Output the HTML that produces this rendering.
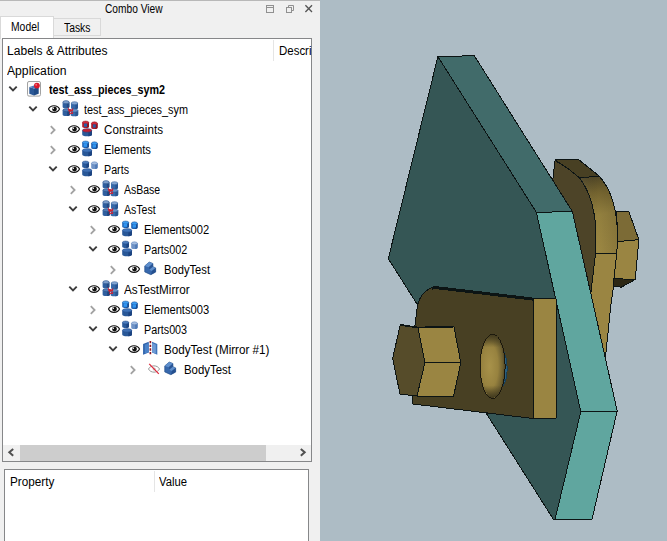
<!DOCTYPE html>
<html><head><meta charset="utf-8"><title>Combo View</title>
<style>
html,body{margin:0;padding:0}
body{width:667px;height:541px;overflow:hidden;position:relative;background:#adbcc5;font-family:"Liberation Sans",sans-serif;font-size:12px;color:#000}
.abs{position:absolute}
#panel{position:absolute;left:0;top:0;width:320px;height:541px;background:#f0f0f0}
#topline{position:absolute;left:0;top:0;width:320px;height:1px;background:#b8b8b8}
.t{position:absolute;white-space:nowrap;line-height:14px;height:14px;transform-origin:0 50%;font-size:12px}
.b{font-weight:bold}
#tabModel{position:absolute;left:0;top:16px;width:54px;height:23px;background:#fff;border:1px solid #d9d9d9;border-bottom:none;box-sizing:border-box}
#tabTasks{position:absolute;left:53px;top:18px;width:48px;height:18px;background:#f0f0f0;border:1px solid #d9d9d9;box-sizing:border-box}
#tree{position:absolute;left:2px;top:38px;width:310px;height:424px;background:#fff;border:1px solid #868789;box-sizing:border-box;overflow:hidden}
#prop{position:absolute;left:4px;top:469px;width:305px;height:80px;background:#fff;border:1px solid #868789;box-sizing:border-box}
#hsb{position:absolute;left:3px;top:445px;width:308px;height:16px;background:#f0f0f0}
#thumb{position:absolute;left:20px;top:445px;width:246px;height:16px;background:#cdcdcd}
.vsep{position:absolute;width:1px;background:#e5e5e5}
svg{position:absolute;overflow:visible}
</style></head>
<body>
<div id="panel"></div><div id="topline"></div>
<div id="tabTasks"></div><div id="tabModel"></div>
<div id="tree"></div>
<div class="vsep" style="left:273px;top:40px;height:21px"></div>
<div id="hsb"></div><div id="thumb"></div>
<div id="prop"></div>
<div class="vsep" style="left:154px;top:471px;height:21px"></div>
<svg style="left:266.0px;top:5.0px" width="9" height="8" viewBox="0 0 9 8"><rect x="0.5" y="0.5" width="7" height="7" fill="none" stroke="#909090"/><path d="M0.5 2.5 H7.5" stroke="#909090"/></svg><svg style="left:286.0px;top:5.0px" width="9" height="8" viewBox="0 0 9 8"><path d="M2.5 2.5 V0.5 H7.5 V5.5 H5.5" fill="none" stroke="#909090"/><rect x="0.5" y="2.5" width="5" height="5" fill="none" stroke="#909090"/></svg><svg style="left:305.0px;top:5.0px" width="8" height="8" viewBox="0 0 8 8"><path d="M0.4 0.3 L7 6.9 M7 0.3 L0.4 6.9" fill="none" stroke="#555" stroke-width="1.35"/></svg>
<svg style="left:7.0px;top:448.2px" width="8" height="9" viewBox="0 0 8 9"><path d="M6.2 0.9 L2.3 4.3 L6.2 7.7" fill="none" stroke="#505050" stroke-width="2"/></svg><svg style="left:299.0px;top:448.2px" width="8" height="9" viewBox="0 0 8 9"><path d="M1.8 0.9 L5.7 4.3 L1.8 7.7" fill="none" stroke="#505050" stroke-width="2"/></svg>
<svg style="left:4.8px;top:81.0px" width="16" height="16" viewBox="-8 -8 16 16"><path d="M-3.7 -2.3 L0.0 1.5 L3.7 -2.3" fill="none" stroke="#3c3c3c" stroke-width="1.9"/></svg>
<svg style="left:26.0px;top:80.9px" width="16" height="17" viewBox="0 0 16 17"><rect x="1.5" y="0.5" width="13" height="14.6" rx="1.5" fill="#fbfbfb" stroke="#a2a2a2"/><path d="M3.30 6.00 L8.00 7.60 L8.00 14.40 L3.30 12.80 Z" fill="#2b5896"/><path d="M12.70 6.00 L8.00 7.60 L8.00 14.40 L12.70 12.80 Z" fill="#1f4a85"/><path d="M3.30 6.00 L8.00 4.40 L12.70 6.00 L8.00 7.60 Z" fill="#4a7abb"/><circle cx="10.9" cy="4.6" r="2.9" fill="#d8182b"/><circle cx="10.2" cy="3.8" r="1" fill="#f06a76"/></svg>
<svg style="left:24.8px;top:101.0px" width="16" height="16" viewBox="-8 -8 16 16"><path d="M-3.7 -2.3 L0.0 1.5 L3.7 -2.3" fill="none" stroke="#3c3c3c" stroke-width="1.9"/></svg>
<svg style="left:48.0px;top:104.8px" width="12" height="8" viewBox="0 0 12 8"><path d="M0.5 4 C2.4 -0.4 9.6 -0.4 11.5 4 C9.6 8.4 2.4 8.4 0.5 4 Z" fill="#fff" stroke="#111" stroke-width="1.15"/><circle cx="6.5" cy="4.1" r="2.4" fill="#111"/><circle cx="5.3" cy="3.2" r="0.8" fill="#fff"/></svg>
<svg style="left:62.0px;top:100.4px" width="16.4" height="16.4" viewBox="0 0 16 16"><path d="M0.60 2.10 V6.50 A3.30 1.50 0 0 0 7.20 6.50 V2.10 Z" fill="#2f5f9f"/><path d="M4.72 2.10 V8.00 A3.30 1.50 0 0 0 7.20 6.50 V2.10 Z" fill="#244b84"/><ellipse cx="3.90" cy="2.10" rx="3.05" ry="1.50" fill="#7d9fcc" stroke="#244b84" stroke-width="0.5"/><path d="M8.80 3.10 V7.50 A3.40 1.50 0 0 0 15.60 7.50 V3.10 Z" fill="#376aaa"/><path d="M13.05 3.10 V9.00 A3.40 1.50 0 0 0 15.60 7.50 V3.10 Z" fill="#28548f"/><ellipse cx="12.20" cy="3.10" rx="3.15" ry="1.50" fill="#84a6d2" stroke="#28548f" stroke-width="0.5"/><path d="M0.60 9.90 V14.10 A3.60 1.50 0 0 0 7.80 14.10 V9.90 Z" fill="#2f5f9f"/><path d="M5.10 9.90 V15.60 A3.60 1.50 0 0 0 7.80 14.10 V9.90 Z" fill="#1d457d"/><ellipse cx="4.20" cy="9.90" rx="3.35" ry="1.50" fill="#4f7ab4" stroke="#1d457d" stroke-width="0.5"/><path d="M8.40 10.30 V14.30 A3.70 1.50 0 0 0 15.80 14.30 V10.30 Z" fill="#376aaa"/><path d="M13.03 10.30 V15.80 A3.70 1.50 0 0 0 15.80 14.30 V10.30 Z" fill="#28548f"/><ellipse cx="12.10" cy="10.30" rx="3.45" ry="1.50" fill="#6790c4" stroke="#28548f" stroke-width="0.5"/><path d="M5.4 6.8 L8.4 10.4 L6.6 11.4 Z M11 7.4 L8.6 10.8 L10.6 11.2 Z M6.6 12 L9.8 13.2 L7.4 14Z" fill="#d4202f"/><circle cx="8" cy="10.3" r="1.4" fill="#d4202f"/><circle cx="9.9" cy="12.6" r="1" fill="#d4202f"/></svg>
<svg style="left:44.5px;top:121.6px" width="16" height="16" viewBox="-8 -8 16 16"><path d="M-2.2 -3.8 L1.6 0.0 L-2.2 3.8" fill="none" stroke="#a2a2a2" stroke-width="1.8"/></svg>
<svg style="left:68.0px;top:124.8px" width="12" height="8" viewBox="0 0 12 8"><path d="M0.5 4 C2.4 -0.4 9.6 -0.4 11.5 4 C9.6 8.4 2.4 8.4 0.5 4 Z" fill="#fff" stroke="#111" stroke-width="1.15"/><circle cx="6.5" cy="4.1" r="2.4" fill="#111"/><circle cx="5.3" cy="3.2" r="0.8" fill="#fff"/></svg>
<svg style="left:82.0px;top:120.0px" width="16" height="17" viewBox="0 0 16 17"><path d="M0.20 2.50 V6.50 A3.40 1.50 0 0 0 7.00 6.50 V2.50 Z" fill="#b01c2c"/><path d="M4.45 2.50 V8.00 A3.40 1.50 0 0 0 7.00 6.50 V2.50 Z" fill="#8d1422"/><ellipse cx="3.60" cy="2.50" rx="3.15" ry="1.50" fill="#d02a3a" stroke="#8d1422" stroke-width="0.5"/><path d="M9.20 3.30 V7.50 A3.20 1.50 0 0 0 15.60 7.50 V3.30 Z" fill="#b01c2c"/><path d="M13.20 3.30 V9.00 A3.20 1.50 0 0 0 15.60 7.50 V3.30 Z" fill="#8d1422"/><ellipse cx="12.40" cy="3.30" rx="2.95" ry="1.50" fill="#d02a3a" stroke="#8d1422" stroke-width="0.5"/><path d="M0.20 10.40 V14.40 A4.90 1.80 0 0 0 10.00 14.40 V10.40 Z" fill="#285898"/><path d="M6.33 10.40 V16.20 A4.90 1.80 0 0 0 10.00 14.40 V10.40 Z" fill="#1c4380"/><ellipse cx="5.10" cy="10.40" rx="4.65" ry="1.80" fill="#c41f30" stroke="#1c4380" stroke-width="0.5"/></svg><svg style="left:82.0px;top:120.0px" width="16" height="17" viewBox="0 0 16 17"><rect x="2" y="3.6" width="3" height="3.2" fill="#2a5ea6"/><rect x="10.9" y="4.4" width="2.8" height="3.2" fill="#2a5ea6"/></svg>
<svg style="left:44.5px;top:141.6px" width="16" height="16" viewBox="-8 -8 16 16"><path d="M-2.2 -3.8 L1.6 0.0 L-2.2 3.8" fill="none" stroke="#a2a2a2" stroke-width="1.8"/></svg>
<svg style="left:68.0px;top:144.8px" width="12" height="8" viewBox="0 0 12 8"><path d="M0.5 4 C2.4 -0.4 9.6 -0.4 11.5 4 C9.6 8.4 2.4 8.4 0.5 4 Z" fill="#fff" stroke="#111" stroke-width="1.15"/><circle cx="6.5" cy="4.1" r="2.4" fill="#111"/><circle cx="5.3" cy="3.2" r="0.8" fill="#fff"/></svg>
<svg style="left:82.0px;top:140.0px" width="16" height="17" viewBox="0 0 16 17"><path d="M0.20 2.50 V6.50 A3.40 1.50 0 0 0 7.00 6.50 V2.50 Z" fill="#1f62b4"/><path d="M4.45 2.50 V8.00 A3.40 1.50 0 0 0 7.00 6.50 V2.50 Z" fill="#184c92"/><ellipse cx="3.60" cy="2.50" rx="3.15" ry="1.50" fill="#3a9af0" stroke="#184c92" stroke-width="0.5"/><path d="M9.20 3.30 V7.50 A3.20 1.50 0 0 0 15.60 7.50 V3.30 Z" fill="#1f62b4"/><path d="M13.20 3.30 V9.00 A3.20 1.50 0 0 0 15.60 7.50 V3.30 Z" fill="#184c92"/><ellipse cx="12.40" cy="3.30" rx="2.95" ry="1.50" fill="#3a9af0" stroke="#184c92" stroke-width="0.5"/><path d="M0.20 10.40 V14.40 A4.90 1.80 0 0 0 10.00 14.40 V10.40 Z" fill="#285898"/><path d="M6.33 10.40 V16.20 A4.90 1.80 0 0 0 10.00 14.40 V10.40 Z" fill="#1c4380"/><ellipse cx="5.10" cy="10.40" rx="4.65" ry="1.80" fill="#3f74ba" stroke="#1c4380" stroke-width="0.5"/></svg><svg style="left:82.0px;top:140.0px" width="16" height="17" viewBox="0 0 16 17"><rect x="1.6" y="3.6" width="3.6" height="3.2" fill="#2f94f0"/><rect x="10.6" y="4.4" width="3.4" height="3.2" fill="#2f94f0"/></svg>
<svg style="left:44.8px;top:161.0px" width="16" height="16" viewBox="-8 -8 16 16"><path d="M-3.7 -2.3 L0.0 1.5 L3.7 -2.3" fill="none" stroke="#3c3c3c" stroke-width="1.9"/></svg>
<svg style="left:68.0px;top:164.8px" width="12" height="8" viewBox="0 0 12 8"><path d="M0.5 4 C2.4 -0.4 9.6 -0.4 11.5 4 C9.6 8.4 2.4 8.4 0.5 4 Z" fill="#fff" stroke="#111" stroke-width="1.15"/><circle cx="6.5" cy="4.1" r="2.4" fill="#111"/><circle cx="5.3" cy="3.2" r="0.8" fill="#fff"/></svg>
<svg style="left:82.0px;top:160.0px" width="16" height="17" viewBox="0 0 16 17"><path d="M0.20 2.50 V6.50 A3.40 1.50 0 0 0 7.00 6.50 V2.50 Z" fill="#2a5a9a"/><path d="M4.45 2.50 V8.00 A3.40 1.50 0 0 0 7.00 6.50 V2.50 Z" fill="#1c4380"/><ellipse cx="3.60" cy="2.50" rx="3.15" ry="1.50" fill="#4a7cbc" stroke="#1c4380" stroke-width="0.5"/><path d="M9.20 3.30 V7.50 A3.20 1.50 0 0 0 15.60 7.50 V3.30 Z" fill="#7094c8"/><path d="M13.20 3.30 V9.00 A3.20 1.50 0 0 0 15.60 7.50 V3.30 Z" fill="#4f78b4"/><ellipse cx="12.40" cy="3.30" rx="2.95" ry="1.50" fill="#a4bde0" stroke="#4f78b4" stroke-width="0.5"/><path d="M0.20 10.40 V14.40 A4.90 1.80 0 0 0 10.00 14.40 V10.40 Z" fill="#285898"/><path d="M6.33 10.40 V16.20 A4.90 1.80 0 0 0 10.00 14.40 V10.40 Z" fill="#1c4380"/><ellipse cx="5.10" cy="10.40" rx="4.65" ry="1.80" fill="#3f70b4" stroke="#1c4380" stroke-width="0.5"/></svg>
<svg style="left:64.5px;top:181.6px" width="16" height="16" viewBox="-8 -8 16 16"><path d="M-2.2 -3.8 L1.6 0.0 L-2.2 3.8" fill="none" stroke="#a2a2a2" stroke-width="1.8"/></svg>
<svg style="left:88.0px;top:184.8px" width="12" height="8" viewBox="0 0 12 8"><path d="M0.5 4 C2.4 -0.4 9.6 -0.4 11.5 4 C9.6 8.4 2.4 8.4 0.5 4 Z" fill="#fff" stroke="#111" stroke-width="1.15"/><circle cx="6.5" cy="4.1" r="2.4" fill="#111"/><circle cx="5.3" cy="3.2" r="0.8" fill="#fff"/></svg>
<svg style="left:102.0px;top:180.4px" width="16.4" height="16.4" viewBox="0 0 16 16"><path d="M0.60 2.10 V6.50 A3.30 1.50 0 0 0 7.20 6.50 V2.10 Z" fill="#2f5f9f"/><path d="M4.72 2.10 V8.00 A3.30 1.50 0 0 0 7.20 6.50 V2.10 Z" fill="#244b84"/><ellipse cx="3.90" cy="2.10" rx="3.05" ry="1.50" fill="#7d9fcc" stroke="#244b84" stroke-width="0.5"/><path d="M8.80 3.10 V7.50 A3.40 1.50 0 0 0 15.60 7.50 V3.10 Z" fill="#376aaa"/><path d="M13.05 3.10 V9.00 A3.40 1.50 0 0 0 15.60 7.50 V3.10 Z" fill="#28548f"/><ellipse cx="12.20" cy="3.10" rx="3.15" ry="1.50" fill="#84a6d2" stroke="#28548f" stroke-width="0.5"/><path d="M0.60 9.90 V14.10 A3.60 1.50 0 0 0 7.80 14.10 V9.90 Z" fill="#2f5f9f"/><path d="M5.10 9.90 V15.60 A3.60 1.50 0 0 0 7.80 14.10 V9.90 Z" fill="#1d457d"/><ellipse cx="4.20" cy="9.90" rx="3.35" ry="1.50" fill="#4f7ab4" stroke="#1d457d" stroke-width="0.5"/><path d="M8.40 10.30 V14.30 A3.70 1.50 0 0 0 15.80 14.30 V10.30 Z" fill="#376aaa"/><path d="M13.03 10.30 V15.80 A3.70 1.50 0 0 0 15.80 14.30 V10.30 Z" fill="#28548f"/><ellipse cx="12.10" cy="10.30" rx="3.45" ry="1.50" fill="#6790c4" stroke="#28548f" stroke-width="0.5"/><path d="M5.4 6.8 L8.4 10.4 L6.6 11.4 Z M11 7.4 L8.6 10.8 L10.6 11.2 Z M6.6 12 L9.8 13.2 L7.4 14Z" fill="#d4202f"/><circle cx="8" cy="10.3" r="1.4" fill="#d4202f"/><circle cx="9.9" cy="12.6" r="1" fill="#d4202f"/></svg>
<svg style="left:64.8px;top:201.0px" width="16" height="16" viewBox="-8 -8 16 16"><path d="M-3.7 -2.3 L0.0 1.5 L3.7 -2.3" fill="none" stroke="#3c3c3c" stroke-width="1.9"/></svg>
<svg style="left:88.0px;top:204.8px" width="12" height="8" viewBox="0 0 12 8"><path d="M0.5 4 C2.4 -0.4 9.6 -0.4 11.5 4 C9.6 8.4 2.4 8.4 0.5 4 Z" fill="#fff" stroke="#111" stroke-width="1.15"/><circle cx="6.5" cy="4.1" r="2.4" fill="#111"/><circle cx="5.3" cy="3.2" r="0.8" fill="#fff"/></svg>
<svg style="left:102.0px;top:200.4px" width="16.4" height="16.4" viewBox="0 0 16 16"><path d="M0.60 2.10 V6.50 A3.30 1.50 0 0 0 7.20 6.50 V2.10 Z" fill="#2f5f9f"/><path d="M4.72 2.10 V8.00 A3.30 1.50 0 0 0 7.20 6.50 V2.10 Z" fill="#244b84"/><ellipse cx="3.90" cy="2.10" rx="3.05" ry="1.50" fill="#7d9fcc" stroke="#244b84" stroke-width="0.5"/><path d="M8.80 3.10 V7.50 A3.40 1.50 0 0 0 15.60 7.50 V3.10 Z" fill="#376aaa"/><path d="M13.05 3.10 V9.00 A3.40 1.50 0 0 0 15.60 7.50 V3.10 Z" fill="#28548f"/><ellipse cx="12.20" cy="3.10" rx="3.15" ry="1.50" fill="#84a6d2" stroke="#28548f" stroke-width="0.5"/><path d="M0.60 9.90 V14.10 A3.60 1.50 0 0 0 7.80 14.10 V9.90 Z" fill="#2f5f9f"/><path d="M5.10 9.90 V15.60 A3.60 1.50 0 0 0 7.80 14.10 V9.90 Z" fill="#1d457d"/><ellipse cx="4.20" cy="9.90" rx="3.35" ry="1.50" fill="#4f7ab4" stroke="#1d457d" stroke-width="0.5"/><path d="M8.40 10.30 V14.30 A3.70 1.50 0 0 0 15.80 14.30 V10.30 Z" fill="#376aaa"/><path d="M13.03 10.30 V15.80 A3.70 1.50 0 0 0 15.80 14.30 V10.30 Z" fill="#28548f"/><ellipse cx="12.10" cy="10.30" rx="3.45" ry="1.50" fill="#6790c4" stroke="#28548f" stroke-width="0.5"/><path d="M5.4 6.8 L8.4 10.4 L6.6 11.4 Z M11 7.4 L8.6 10.8 L10.6 11.2 Z M6.6 12 L9.8 13.2 L7.4 14Z" fill="#d4202f"/><circle cx="8" cy="10.3" r="1.4" fill="#d4202f"/><circle cx="9.9" cy="12.6" r="1" fill="#d4202f"/></svg>
<svg style="left:84.5px;top:221.6px" width="16" height="16" viewBox="-8 -8 16 16"><path d="M-2.2 -3.8 L1.6 0.0 L-2.2 3.8" fill="none" stroke="#a2a2a2" stroke-width="1.8"/></svg>
<svg style="left:108.0px;top:224.8px" width="12" height="8" viewBox="0 0 12 8"><path d="M0.5 4 C2.4 -0.4 9.6 -0.4 11.5 4 C9.6 8.4 2.4 8.4 0.5 4 Z" fill="#fff" stroke="#111" stroke-width="1.15"/><circle cx="6.5" cy="4.1" r="2.4" fill="#111"/><circle cx="5.3" cy="3.2" r="0.8" fill="#fff"/></svg>
<svg style="left:122.0px;top:220.0px" width="16" height="17" viewBox="0 0 16 17"><path d="M0.20 2.50 V6.50 A3.40 1.50 0 0 0 7.00 6.50 V2.50 Z" fill="#1f62b4"/><path d="M4.45 2.50 V8.00 A3.40 1.50 0 0 0 7.00 6.50 V2.50 Z" fill="#184c92"/><ellipse cx="3.60" cy="2.50" rx="3.15" ry="1.50" fill="#3a9af0" stroke="#184c92" stroke-width="0.5"/><path d="M9.20 3.30 V7.50 A3.20 1.50 0 0 0 15.60 7.50 V3.30 Z" fill="#1f62b4"/><path d="M13.20 3.30 V9.00 A3.20 1.50 0 0 0 15.60 7.50 V3.30 Z" fill="#184c92"/><ellipse cx="12.40" cy="3.30" rx="2.95" ry="1.50" fill="#3a9af0" stroke="#184c92" stroke-width="0.5"/><path d="M0.20 10.40 V14.40 A4.90 1.80 0 0 0 10.00 14.40 V10.40 Z" fill="#285898"/><path d="M6.33 10.40 V16.20 A4.90 1.80 0 0 0 10.00 14.40 V10.40 Z" fill="#1c4380"/><ellipse cx="5.10" cy="10.40" rx="4.65" ry="1.80" fill="#3f74ba" stroke="#1c4380" stroke-width="0.5"/></svg><svg style="left:122.0px;top:220.0px" width="16" height="17" viewBox="0 0 16 17"><rect x="1.6" y="3.6" width="3.6" height="3.2" fill="#2f94f0"/><rect x="10.6" y="4.4" width="3.4" height="3.2" fill="#2f94f0"/></svg>
<svg style="left:84.8px;top:241.0px" width="16" height="16" viewBox="-8 -8 16 16"><path d="M-3.7 -2.3 L0.0 1.5 L3.7 -2.3" fill="none" stroke="#3c3c3c" stroke-width="1.9"/></svg>
<svg style="left:108.0px;top:244.8px" width="12" height="8" viewBox="0 0 12 8"><path d="M0.5 4 C2.4 -0.4 9.6 -0.4 11.5 4 C9.6 8.4 2.4 8.4 0.5 4 Z" fill="#fff" stroke="#111" stroke-width="1.15"/><circle cx="6.5" cy="4.1" r="2.4" fill="#111"/><circle cx="5.3" cy="3.2" r="0.8" fill="#fff"/></svg>
<svg style="left:122.0px;top:240.0px" width="16" height="17" viewBox="0 0 16 17"><path d="M0.20 2.50 V6.50 A3.40 1.50 0 0 0 7.00 6.50 V2.50 Z" fill="#2a5a9a"/><path d="M4.45 2.50 V8.00 A3.40 1.50 0 0 0 7.00 6.50 V2.50 Z" fill="#1c4380"/><ellipse cx="3.60" cy="2.50" rx="3.15" ry="1.50" fill="#4a7cbc" stroke="#1c4380" stroke-width="0.5"/><path d="M9.20 3.30 V7.50 A3.20 1.50 0 0 0 15.60 7.50 V3.30 Z" fill="#7094c8"/><path d="M13.20 3.30 V9.00 A3.20 1.50 0 0 0 15.60 7.50 V3.30 Z" fill="#4f78b4"/><ellipse cx="12.40" cy="3.30" rx="2.95" ry="1.50" fill="#a4bde0" stroke="#4f78b4" stroke-width="0.5"/><path d="M0.20 10.40 V14.40 A4.90 1.80 0 0 0 10.00 14.40 V10.40 Z" fill="#285898"/><path d="M6.33 10.40 V16.20 A4.90 1.80 0 0 0 10.00 14.40 V10.40 Z" fill="#1c4380"/><ellipse cx="5.10" cy="10.40" rx="4.65" ry="1.80" fill="#3f70b4" stroke="#1c4380" stroke-width="0.5"/></svg>
<svg style="left:104.5px;top:261.6px" width="16" height="16" viewBox="-8 -8 16 16"><path d="M-2.2 -3.8 L1.6 0.0 L-2.2 3.8" fill="none" stroke="#a2a2a2" stroke-width="1.8"/></svg>
<svg style="left:128.0px;top:264.8px" width="12" height="8" viewBox="0 0 12 8"><path d="M0.5 4 C2.4 -0.4 9.6 -0.4 11.5 4 C9.6 8.4 2.4 8.4 0.5 4 Z" fill="#fff" stroke="#111" stroke-width="1.15"/><circle cx="6.5" cy="4.1" r="2.4" fill="#111"/><circle cx="5.3" cy="3.2" r="0.8" fill="#fff"/></svg>
<svg style="left:144.0px;top:261.2px" width="12.4" height="14.2" viewBox="0 0 13.2 15.6"><path d="M0.6 5.4 L5.6 1.2 L9.6 2.8 L9.6 6.2 L12.6 7.6 L12.6 12.2 L7.2 15 L0.6 12 Z" fill="#3768ac" stroke="#1f4a85" stroke-width="0.7"/><path d="M0.6 5.4 L5.6 1.2 L9.6 2.8 L5 6.8 Z" fill="#5f8fcc"/><path d="M5 6.8 L9.6 2.8 L9.6 6.2 L5.6 9.6 Z" fill="#2a5595"/><path d="M5.6 9.6 L9.6 6.2 L12.6 7.6 L8.4 11 Z" fill="#5f8fcc"/><path d="M8.4 11 L12.6 7.6 L12.6 12.2 L7.6 15 Z" fill="#24508f"/></svg>
<svg style="left:64.8px;top:281.0px" width="16" height="16" viewBox="-8 -8 16 16"><path d="M-3.7 -2.3 L0.0 1.5 L3.7 -2.3" fill="none" stroke="#3c3c3c" stroke-width="1.9"/></svg>
<svg style="left:88.0px;top:284.8px" width="12" height="8" viewBox="0 0 12 8"><path d="M0.5 4 C2.4 -0.4 9.6 -0.4 11.5 4 C9.6 8.4 2.4 8.4 0.5 4 Z" fill="#fff" stroke="#111" stroke-width="1.15"/><circle cx="6.5" cy="4.1" r="2.4" fill="#111"/><circle cx="5.3" cy="3.2" r="0.8" fill="#fff"/></svg>
<svg style="left:102.0px;top:280.4px" width="16.4" height="16.4" viewBox="0 0 16 16"><path d="M0.60 2.10 V6.50 A3.30 1.50 0 0 0 7.20 6.50 V2.10 Z" fill="#2f5f9f"/><path d="M4.72 2.10 V8.00 A3.30 1.50 0 0 0 7.20 6.50 V2.10 Z" fill="#244b84"/><ellipse cx="3.90" cy="2.10" rx="3.05" ry="1.50" fill="#7d9fcc" stroke="#244b84" stroke-width="0.5"/><path d="M8.80 3.10 V7.50 A3.40 1.50 0 0 0 15.60 7.50 V3.10 Z" fill="#376aaa"/><path d="M13.05 3.10 V9.00 A3.40 1.50 0 0 0 15.60 7.50 V3.10 Z" fill="#28548f"/><ellipse cx="12.20" cy="3.10" rx="3.15" ry="1.50" fill="#84a6d2" stroke="#28548f" stroke-width="0.5"/><path d="M0.60 9.90 V14.10 A3.60 1.50 0 0 0 7.80 14.10 V9.90 Z" fill="#2f5f9f"/><path d="M5.10 9.90 V15.60 A3.60 1.50 0 0 0 7.80 14.10 V9.90 Z" fill="#1d457d"/><ellipse cx="4.20" cy="9.90" rx="3.35" ry="1.50" fill="#4f7ab4" stroke="#1d457d" stroke-width="0.5"/><path d="M8.40 10.30 V14.30 A3.70 1.50 0 0 0 15.80 14.30 V10.30 Z" fill="#376aaa"/><path d="M13.03 10.30 V15.80 A3.70 1.50 0 0 0 15.80 14.30 V10.30 Z" fill="#28548f"/><ellipse cx="12.10" cy="10.30" rx="3.45" ry="1.50" fill="#6790c4" stroke="#28548f" stroke-width="0.5"/><path d="M5.4 6.8 L8.4 10.4 L6.6 11.4 Z M11 7.4 L8.6 10.8 L10.6 11.2 Z M6.6 12 L9.8 13.2 L7.4 14Z" fill="#d4202f"/><circle cx="8" cy="10.3" r="1.4" fill="#d4202f"/><circle cx="9.9" cy="12.6" r="1" fill="#d4202f"/></svg>
<svg style="left:84.5px;top:301.6px" width="16" height="16" viewBox="-8 -8 16 16"><path d="M-2.2 -3.8 L1.6 0.0 L-2.2 3.8" fill="none" stroke="#a2a2a2" stroke-width="1.8"/></svg>
<svg style="left:108.0px;top:304.8px" width="12" height="8" viewBox="0 0 12 8"><path d="M0.5 4 C2.4 -0.4 9.6 -0.4 11.5 4 C9.6 8.4 2.4 8.4 0.5 4 Z" fill="#fff" stroke="#111" stroke-width="1.15"/><circle cx="6.5" cy="4.1" r="2.4" fill="#111"/><circle cx="5.3" cy="3.2" r="0.8" fill="#fff"/></svg>
<svg style="left:122.0px;top:300.0px" width="16" height="17" viewBox="0 0 16 17"><path d="M0.20 2.50 V6.50 A3.40 1.50 0 0 0 7.00 6.50 V2.50 Z" fill="#1f62b4"/><path d="M4.45 2.50 V8.00 A3.40 1.50 0 0 0 7.00 6.50 V2.50 Z" fill="#184c92"/><ellipse cx="3.60" cy="2.50" rx="3.15" ry="1.50" fill="#3a9af0" stroke="#184c92" stroke-width="0.5"/><path d="M9.20 3.30 V7.50 A3.20 1.50 0 0 0 15.60 7.50 V3.30 Z" fill="#1f62b4"/><path d="M13.20 3.30 V9.00 A3.20 1.50 0 0 0 15.60 7.50 V3.30 Z" fill="#184c92"/><ellipse cx="12.40" cy="3.30" rx="2.95" ry="1.50" fill="#3a9af0" stroke="#184c92" stroke-width="0.5"/><path d="M0.20 10.40 V14.40 A4.90 1.80 0 0 0 10.00 14.40 V10.40 Z" fill="#285898"/><path d="M6.33 10.40 V16.20 A4.90 1.80 0 0 0 10.00 14.40 V10.40 Z" fill="#1c4380"/><ellipse cx="5.10" cy="10.40" rx="4.65" ry="1.80" fill="#3f74ba" stroke="#1c4380" stroke-width="0.5"/></svg><svg style="left:122.0px;top:300.0px" width="16" height="17" viewBox="0 0 16 17"><rect x="1.6" y="3.6" width="3.6" height="3.2" fill="#2f94f0"/><rect x="10.6" y="4.4" width="3.4" height="3.2" fill="#2f94f0"/></svg>
<svg style="left:84.8px;top:321.0px" width="16" height="16" viewBox="-8 -8 16 16"><path d="M-3.7 -2.3 L0.0 1.5 L3.7 -2.3" fill="none" stroke="#3c3c3c" stroke-width="1.9"/></svg>
<svg style="left:108.0px;top:324.8px" width="12" height="8" viewBox="0 0 12 8"><path d="M0.5 4 C2.4 -0.4 9.6 -0.4 11.5 4 C9.6 8.4 2.4 8.4 0.5 4 Z" fill="#fff" stroke="#111" stroke-width="1.15"/><circle cx="6.5" cy="4.1" r="2.4" fill="#111"/><circle cx="5.3" cy="3.2" r="0.8" fill="#fff"/></svg>
<svg style="left:122.0px;top:320.0px" width="16" height="17" viewBox="0 0 16 17"><path d="M0.20 2.50 V6.50 A3.40 1.50 0 0 0 7.00 6.50 V2.50 Z" fill="#2a5a9a"/><path d="M4.45 2.50 V8.00 A3.40 1.50 0 0 0 7.00 6.50 V2.50 Z" fill="#1c4380"/><ellipse cx="3.60" cy="2.50" rx="3.15" ry="1.50" fill="#4a7cbc" stroke="#1c4380" stroke-width="0.5"/><path d="M9.20 3.30 V7.50 A3.20 1.50 0 0 0 15.60 7.50 V3.30 Z" fill="#7094c8"/><path d="M13.20 3.30 V9.00 A3.20 1.50 0 0 0 15.60 7.50 V3.30 Z" fill="#4f78b4"/><ellipse cx="12.40" cy="3.30" rx="2.95" ry="1.50" fill="#a4bde0" stroke="#4f78b4" stroke-width="0.5"/><path d="M0.20 10.40 V14.40 A4.90 1.80 0 0 0 10.00 14.40 V10.40 Z" fill="#285898"/><path d="M6.33 10.40 V16.20 A4.90 1.80 0 0 0 10.00 14.40 V10.40 Z" fill="#1c4380"/><ellipse cx="5.10" cy="10.40" rx="4.65" ry="1.80" fill="#3f70b4" stroke="#1c4380" stroke-width="0.5"/></svg>
<svg style="left:104.8px;top:341.0px" width="16" height="16" viewBox="-8 -8 16 16"><path d="M-3.7 -2.3 L0.0 1.5 L3.7 -2.3" fill="none" stroke="#3c3c3c" stroke-width="1.9"/></svg>
<svg style="left:128.0px;top:344.8px" width="12" height="8" viewBox="0 0 12 8"><path d="M0.5 4 C2.4 -0.4 9.6 -0.4 11.5 4 C9.6 8.4 2.4 8.4 0.5 4 Z" fill="#fff" stroke="#111" stroke-width="1.15"/><circle cx="6.5" cy="4.1" r="2.4" fill="#111"/><circle cx="5.3" cy="3.2" r="0.8" fill="#fff"/></svg>
<svg style="left:142.0px;top:341.4px" width="16.4" height="14.6" viewBox="0 0 16.4 16"><path d="M0.4 3.2 L6.6 0.8 L6.6 12.6 L0.4 15 Z" fill="#2f62aa"/><path d="M2.2 4 L6.6 2.2 L6.6 12.6 L2.2 13.6 Z" fill="#4a82c8"/><path d="M16 3.2 L10.2 0.8 L10.2 12.6 L16 15 Z" fill="#3f74ba"/><path d="M14.4 4 L10.2 2.2 L10.2 12.6 L14.4 13.6 Z" fill="#6d9ad4"/><path d="M8.4 0 V16" stroke="#8c1420" stroke-width="1.8" stroke-dasharray="2.6 1.4"/></svg>
<svg style="left:124.5px;top:361.6px" width="16" height="16" viewBox="-8 -8 16 16"><path d="M-2.2 -3.8 L1.6 0.0 L-2.2 3.8" fill="none" stroke="#a2a2a2" stroke-width="1.8"/></svg>
<svg style="left:148.0px;top:364.8px" width="12" height="8" viewBox="0 0 12 8"><path d="M0.5 4 C2.4 -0.2 9.6 -0.2 11.5 4 C9.6 8.2 2.4 8.2 0.5 4 Z" fill="#fff" stroke="#9a9a9a" stroke-width="1"/><circle cx="6.2" cy="4" r="1.6" fill="#c8c8c8"/><path d="M1.2 -1.2 L10.8 8.8" stroke="#e0263a" stroke-width="1.2"/></svg>
<svg style="left:164.0px;top:361.2px" width="12.4" height="14.2" viewBox="0 0 13.2 15.6"><path d="M0.6 5.4 L5.6 1.2 L9.6 2.8 L9.6 6.2 L12.6 7.6 L12.6 12.2 L7.2 15 L0.6 12 Z" fill="#3768ac" stroke="#1f4a85" stroke-width="0.7"/><path d="M0.6 5.4 L5.6 1.2 L9.6 2.8 L5 6.8 Z" fill="#5f8fcc"/><path d="M5 6.8 L9.6 2.8 L9.6 6.2 L5.6 9.6 Z" fill="#2a5595"/><path d="M5.6 9.6 L9.6 6.2 L12.6 7.6 L8.4 11 Z" fill="#5f8fcc"/><path d="M8.4 11 L12.6 7.6 L12.6 12.2 L7.6 15 Z" fill="#24508f"/></svg>
<span class="t" style="left:105.2px;top:2.1px;transform:translateY(0.00px) scaleX(0.8479);">Combo View</span>
<span class="t" style="left:11.0px;top:19.9px;transform:translateY(0.00px) scaleX(0.8627);">Model</span>
<span class="t" style="left:63.8px;top:20.9px;transform:translateY(0.00px) scaleX(0.8635);">Tasks</span>
<span class="t" style="left:7.4px;top:43.5px;transform:translateY(0.00px) scaleX(1.0054);">Labels &amp; Attributes</span>
<span class="t" style="left:278.8px;top:43.5px;transform:translateY(0.00px) scaleX(0.9554);">Descri</span>
<span class="t" style="left:6.8px;top:64.0px;transform:translateY(0.00px) scaleX(1.0133);">Application</span>
<span class="t" style="left:9.6px;top:474.8px;transform:translateY(0.00px) scaleX(0.9766);">Property</span>
<span class="t" style="left:159.0px;top:474.8px;transform:translateY(0.00px) scaleX(0.9392);">Value</span>
<span class="t b" style="left:48.5px;top:82.8px;transform:translateY(0.00px) scaleX(0.8962);">test_ass_pieces_sym2</span>
<span class="t" style="left:84.4px;top:102.8px;transform:translateY(0.00px) scaleX(0.9064);">test_ass_pieces_sym</span>
<span class="t" style="left:104.4px;top:122.8px;transform:translateY(0.00px) scaleX(0.9719);">Constraints</span>
<span class="t" style="left:104.4px;top:142.8px;transform:translateY(0.00px) scaleX(0.9394);">Elements</span>
<span class="t" style="left:104.4px;top:162.8px;transform:translateY(0.00px) scaleX(0.8924);">Parts</span>
<span class="t" style="left:124.4px;top:182.8px;transform:translateY(0.00px) scaleX(0.8753);">AsBase</span>
<span class="t" style="left:124.4px;top:202.8px;transform:translateY(0.00px) scaleX(0.8802);">AsTest</span>
<span class="t" style="left:144.4px;top:222.8px;transform:translateY(0.00px) scaleX(0.9294);">Elements002</span>
<span class="t" style="left:144.4px;top:242.8px;transform:translateY(0.00px) scaleX(0.8994);">Parts002</span>
<span class="t" style="left:164.4px;top:262.8px;transform:translateY(0.00px) scaleX(0.9319);">BodyTest</span>
<span class="t" style="left:124.4px;top:282.8px;transform:translateY(0.00px) scaleX(0.9741);">AsTestMirror</span>
<span class="t" style="left:144.4px;top:302.8px;transform:translateY(0.00px) scaleX(0.9308);">Elements003</span>
<span class="t" style="left:144.4px;top:322.8px;transform:translateY(0.00px) scaleX(0.8973);">Parts003</span>
<span class="t" style="left:164.4px;top:342.8px;transform:translateY(0.00px) scaleX(0.9696);">BodyTest (Mirror #1)</span>
<span class="t" style="left:184.4px;top:362.8px;transform:translateY(0.00px) scaleX(0.9502);">BodyTest</span>
<svg style="left:0;top:0" width="667" height="541" viewBox="0 0 667 541" shape-rendering="crispEdges"><g><defs><linearGradient id="gcyl" gradientUnits="userSpaceOnUse" x1="590" y1="176" x2="606" y2="254"><stop offset="0" stop-color="#4c4325"/><stop offset="0.22" stop-color="#73632f"/><stop offset="0.5" stop-color="#93803f"/><stop offset="1" stop-color="#9d8843"/></linearGradient><linearGradient id="gcyl2" x1="0" y1="0" x2="1" y2="0"><stop offset="0" stop-color="#fff" stop-opacity="0.06"/><stop offset="0.5" stop-color="#000" stop-opacity="0"/><stop offset="1" stop-color="#000" stop-opacity="0.12"/></linearGradient><linearGradient id="ghole2" x1="0" y1="0" x2="0" y2="1"><stop offset="0" stop-color="#3e371d" stop-opacity="0.95"/><stop offset="0.2" stop-color="#3e371d" stop-opacity="0"/><stop offset="0.8" stop-color="#3e371d" stop-opacity="0"/><stop offset="1" stop-color="#3e371d" stop-opacity="0.95"/></linearGradient><radialGradient id="ghole" cx="0.38" cy="0.5" r="0.62"><stop offset="0" stop-color="#a8924a"/><stop offset="0.55" stop-color="#97823f"/><stop offset="0.85" stop-color="#6e6031"/><stop offset="1" stop-color="#4e4526"/></radialGradient></defs><path d="M555.2 159 L577.9 159 L599.1 176 C609 187 615.5 203 617 225 L617.6 241.6 L616.7 253.6 L613 290.6 L611 302 L606 352 L604.5 358 L560 300 L556 200 L552.9 179 Z" fill="#4d4428" stroke="#0c1414" stroke-width="1" stroke-linejoin="round" /><path d="M555.2 159 L577.9 159 L599.1 176 L579.7 177.9 C573 172 565 166 555.2 160 Z" fill="#484023" stroke="#0c1414" stroke-width="1" stroke-linejoin="round" /><path d="M579.7 177.9 L599.1 176 C609 187 615.5 203 617 225 L617.6 241.6 L616.7 253.6 L595.5 253.6 L596 237 C596 215 592 195 579.7 177.9 Z" fill="url(#gcyl)" stroke="#0c1414" stroke-width="1" stroke-linejoin="round" /><path d="M579.7 177.9 L599.1 176 C609 187 615.5 203 617 225 L617.6 241.6 L616.7 253.6 L595.5 253.6 L596 237 C596 215 592 195 579.7 177.9 Z" fill="url(#gcyl2)" stroke="none" stroke-width="1" stroke-linejoin="round" /><path d="M555.2 160.5 C565 166 573 172 579.7 177.9" fill="none" stroke="#0c1414" stroke-width="1" stroke-linejoin="round" /><path d="M595.5 253.6 L616.7 253.6 L613 290.6 L611.2 302 L606 352 L604.8 358 L590.8 294 L591.8 285 Z" fill="#9a8542" stroke="#0c1414" stroke-width="1" stroke-linejoin="round" /><polygon points="616.7,211.2 628.7,211.2 638.9,239.7 617.6,241.6" fill="#7c6b36" stroke="#0c1414" stroke-width="1" stroke-linejoin="round" /><polygon points="617.6,241.6 638.9,239.7 635.2,279.5 613.9,278.6 616.7,253.6" fill="#9a8542" stroke="#0c1414" stroke-width="1" stroke-linejoin="round" /><polygon points="613.9,278.6 635.2,279.5 621.3,287.2 613.2,286.2" fill="#2c2714" stroke="#0c1414" stroke-width="1" stroke-linejoin="round" /><polygon points="437.9,56.6 474.3,55.7 572.4,211.5 536.4,212.4" fill="#416b6a" stroke="#0c1414" stroke-width="1" stroke-linejoin="round" /><polygon points="437.9,56.6 536.4,212.4 580.8,411.8 555.0,519.6 553.8,520.0 388.3,258.7" fill="#355655" stroke="#0c1414" stroke-width="1" stroke-linejoin="round" /><polygon points="536.4,212.4 572.4,211.5 617.2,411.0 580.8,411.8" fill="#60a69f" stroke="#0c1414" stroke-width="1" stroke-linejoin="round" /><polygon points="580.8,411.8 617.2,411.0 592.0,519.2 555.0,519.6" fill="#60a69f" stroke="#0c1414" stroke-width="1" stroke-linejoin="round" /><path d="M417.5 305 C420 296 426 288.5 435.5 286.8 L533.9 298.5 L533.9 418.6 L412.9 404 L412.9 396 L415 325 Z" fill="#484023" stroke="#0c1414" stroke-width="1" stroke-linejoin="round" /><path d="M432 288.2 L436 287.6 L533.9 299.2 L556 299.4" fill="none" stroke="#0c1414" stroke-width="3" stroke-linejoin="round" /><polygon points="533.9,298.8 556.1,299.0 556.1,418.0 533.9,418.6" fill="#9a8542" stroke="#0c1414" stroke-width="1" stroke-linejoin="round" /><path d="M502.6 350 C508.4 358 508.6 377 503.4 385.5 C505.6 374 505.4 360 502.6 350 Z" fill="#2b5f7e" stroke="#183f58" stroke-width="1" stroke-linejoin="round" /><ellipse cx="492.6" cy="366.3" rx="12.5" ry="32.2" fill="url(#ghole)" stroke="#15130a" stroke-width="0.9"/><ellipse cx="492.6" cy="366.3" rx="12" ry="31.7" fill="url(#ghole2)" stroke="none"/><polygon points="400.3,324.8 417.9,327.6 424.9,362.7 417.0,396.0 400.0,394.1 392.6,358.4" fill="#564c2a" stroke="#0c1414" stroke-width="1" stroke-linejoin="round" /><polygon points="417.9,327.6 453.9,326.6 460.8,362.7 424.9,362.7" fill="#9a8542" stroke="#0c1414" stroke-width="1" stroke-linejoin="round" /><polygon points="424.9,362.7 460.8,362.7 453.6,396.0 417.0,396.0" fill="#9a8542" stroke="#0c1414" stroke-width="1" stroke-linejoin="round" /><path d="M400.3 324.8 L417.9 327.6 L453.9 326.6" fill="none" stroke="#0c1414" stroke-width="1.8" stroke-linejoin="round" /></g></svg>
</body></html>
